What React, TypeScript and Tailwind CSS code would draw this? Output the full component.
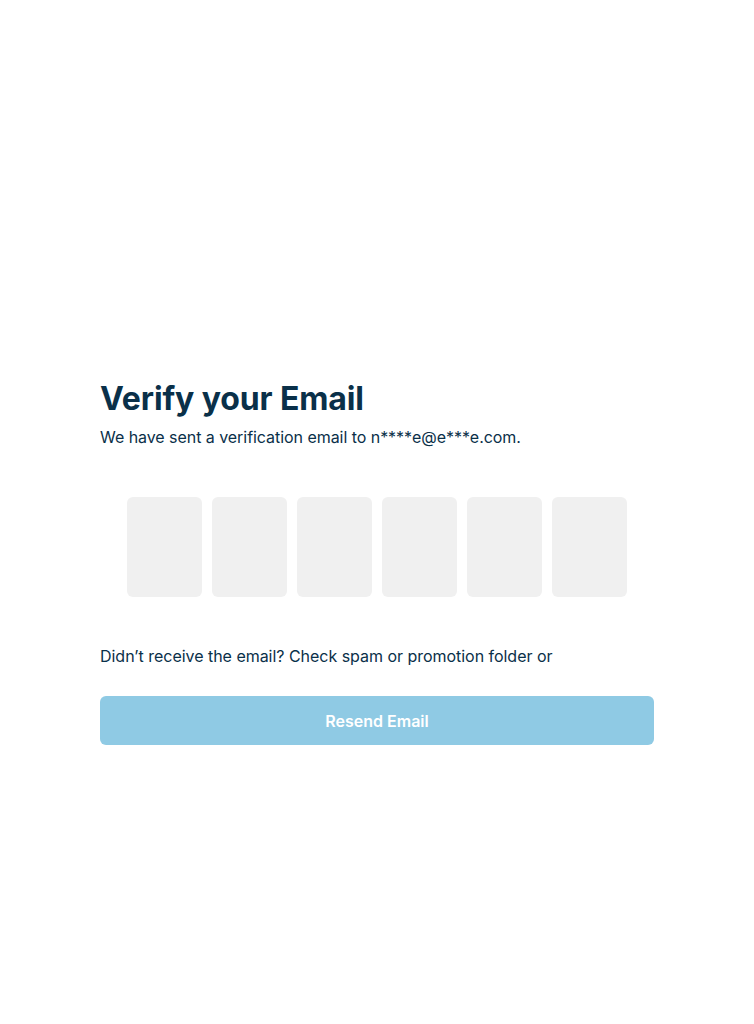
export default function App() {
  const digits = [0, 1, 2, 3, 4, 5];

  return (
    <div
      className="min-h-screen bg-white px-[100px] pt-[379px]"
      style={{ fontFamily: "Inter, 'Noto Sans', sans-serif" }}
    >
      <div className="w-[554px] text-[#0a3049]">
        <h1 className="text-[32px] leading-[40px] font-bold tracking-[-0.12px]">
          Verify your Email
        </h1>
        <p className="mt-[6px] text-base leading-6 tracking-[-0.05px]">
          We have sent a verification email to n****e@e***e.com.
        </p>

        <div className="mt-12 flex justify-center gap-[10px]">
          {digits.map((d) => (
            <input
              key={d}
              type="text"
              maxLength={1}
              className="h-[100px] w-[75px] rounded-md bg-[#f0f0f0] text-center text-3xl font-semibold outline-none"
            />
          ))}
        </div>

        <p className="mt-[47px] text-base leading-6 tracking-[-0.03px]">
          Didn’t receive the email? Check spam or promotion folder or
        </p>

        <button
          disabled
          className="mt-7 h-[49px] w-full rounded-md bg-[#8fcae4] text-base font-semibold text-white"
        >
          Resend Email
        </button>
      </div>
    </div>
  );
}
